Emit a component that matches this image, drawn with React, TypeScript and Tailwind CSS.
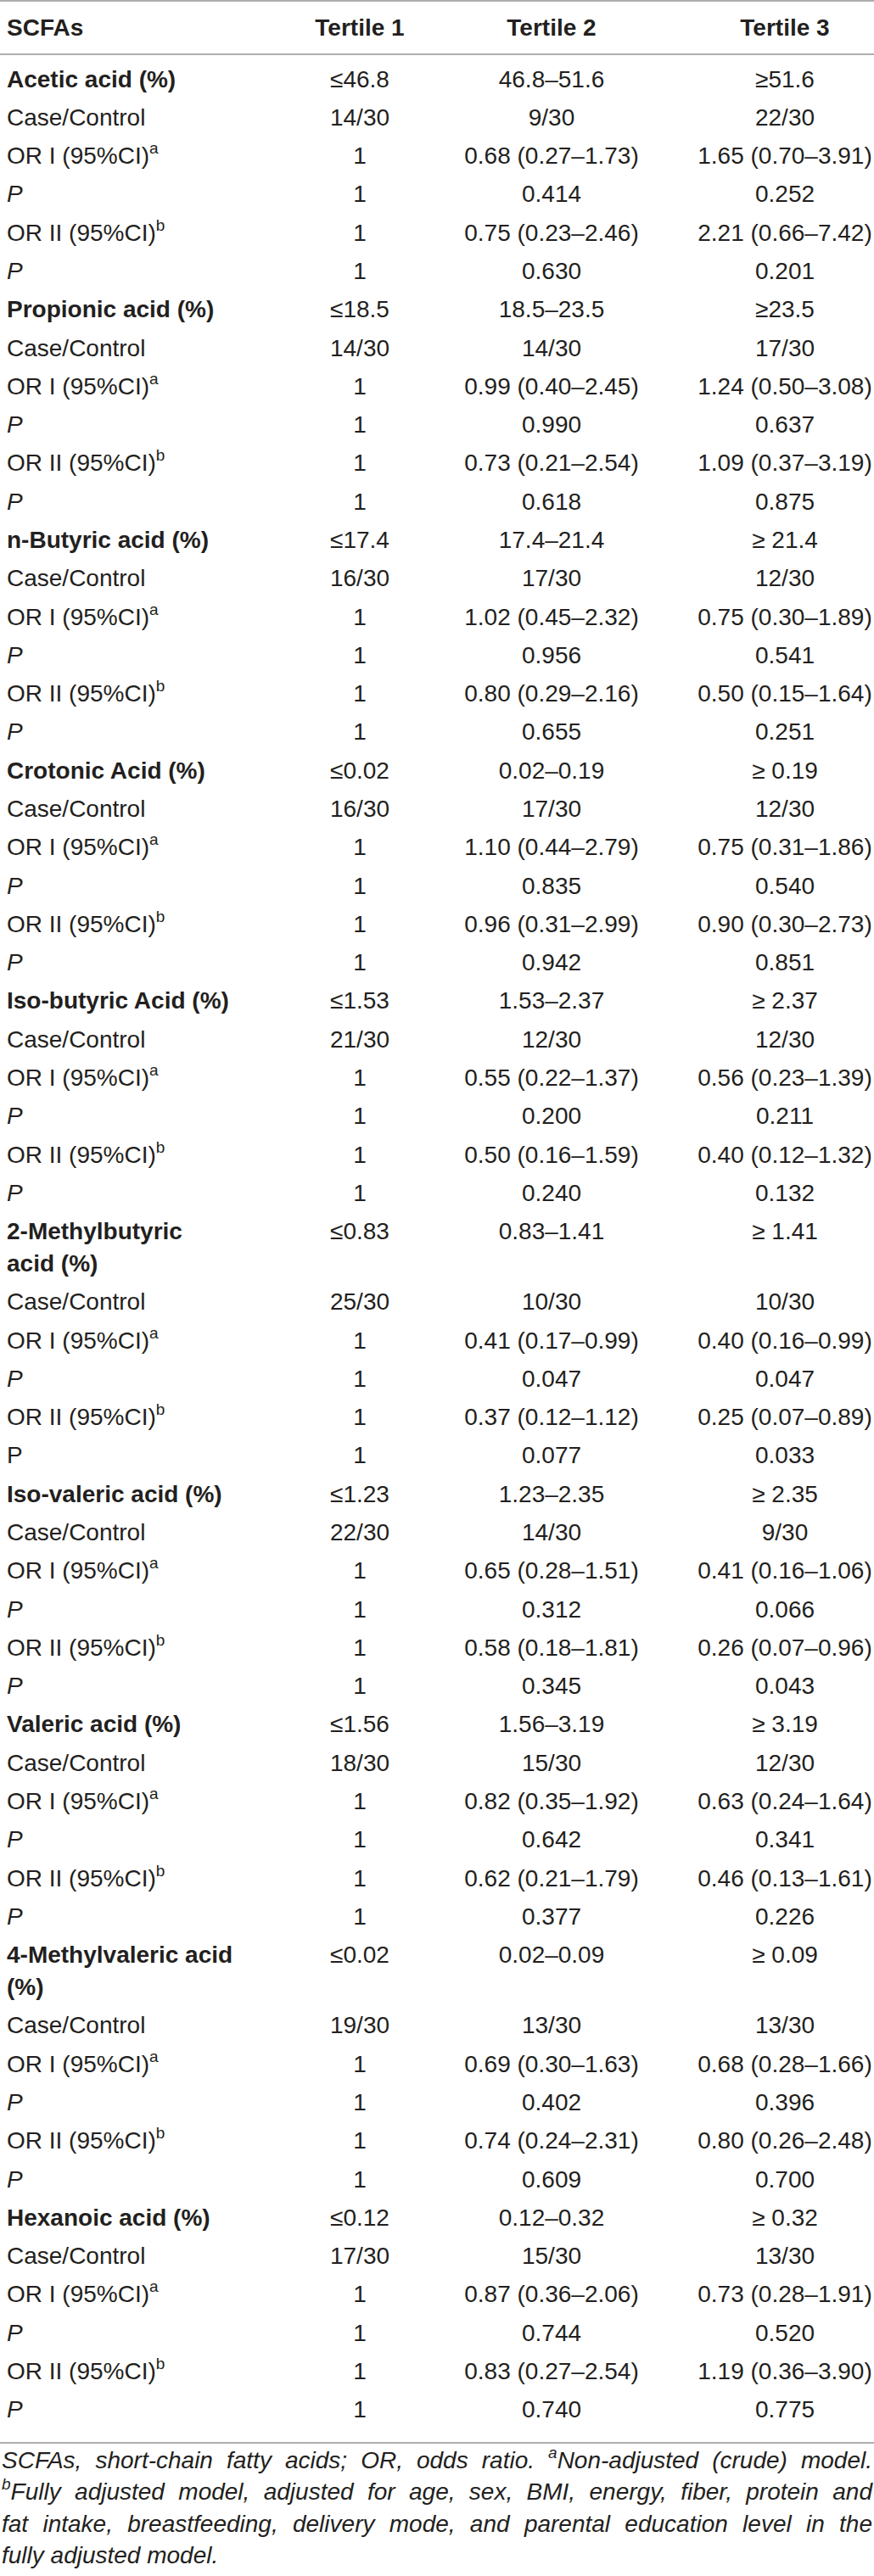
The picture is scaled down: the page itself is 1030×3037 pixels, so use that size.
import React from "react";

type Row = { label: React.ReactNode; c: [string, string, string] };
type Group = { name: React.ReactNode; range: [string, string, string]; rows: [string, string, string][]; lastPUpright?: boolean };

const Sup = ({ children }: { children: React.ReactNode }) => (
  <sup className="text-[19px] leading-none relative top-[-12px] align-baseline">{children}</sup>
);

const groups: Group[] = [
  {
    name: "Acetic acid (%)",
    range: ["≤46.8", "46.8–51.6", "≥51.6"],
    rows: [
      ["14/30", "9/30", "22/30"],
      ["1", "0.68 (0.27–1.73)", "1.65 (0.70–3.91)"],
      ["1", "0.414", "0.252"],
      ["1", "0.75 (0.23–2.46)", "2.21 (0.66–7.42)"],
      ["1", "0.630", "0.201"],
    ],
  },
  {
    name: "Propionic acid (%)",
    range: ["≤18.5", "18.5–23.5", "≥23.5"],
    rows: [
      ["14/30", "14/30", "17/30"],
      ["1", "0.99 (0.40–2.45)", "1.24 (0.50–3.08)"],
      ["1", "0.990", "0.637"],
      ["1", "0.73 (0.21–2.54)", "1.09 (0.37–3.19)"],
      ["1", "0.618", "0.875"],
    ],
  },
  {
    name: "n-Butyric acid (%)",
    range: ["≤17.4", "17.4–21.4", "≥ 21.4"],
    rows: [
      ["16/30", "17/30", "12/30"],
      ["1", "1.02 (0.45–2.32)", "0.75 (0.30–1.89)"],
      ["1", "0.956", "0.541"],
      ["1", "0.80 (0.29–2.16)", "0.50 (0.15–1.64)"],
      ["1", "0.655", "0.251"],
    ],
  },
  {
    name: "Crotonic Acid (%)",
    range: ["≤0.02", "0.02–0.19", "≥ 0.19"],
    rows: [
      ["16/30", "17/30", "12/30"],
      ["1", "1.10 (0.44–2.79)", "0.75 (0.31–1.86)"],
      ["1", "0.835", "0.540"],
      ["1", "0.96 (0.31–2.99)", "0.90 (0.30–2.73)"],
      ["1", "0.942", "0.851"],
    ],
  },
  {
    name: "Iso-butyric Acid (%)",
    range: ["≤1.53", "1.53–2.37", "≥ 2.37"],
    rows: [
      ["21/30", "12/30", "12/30"],
      ["1", "0.55 (0.22–1.37)", "0.56 (0.23–1.39)"],
      ["1", "0.200", "0.211"],
      ["1", "0.50 (0.16–1.59)", "0.40 (0.12–1.32)"],
      ["1", "0.240", "0.132"],
    ],
  },
  {
    name: (
      <>
        2-Methylbutyric
        <br />
        acid (%)
      </>
    ),
    range: ["≤0.83", "0.83–1.41", "≥ 1.41"],
    rows: [
      ["25/30", "10/30", "10/30"],
      ["1", "0.41 (0.17–0.99)", "0.40 (0.16–0.99)"],
      ["1", "0.047", "0.047"],
      ["1", "0.37 (0.12–1.12)", "0.25 (0.07–0.89)"],
      ["1", "0.077", "0.033"],
    ],
    lastPUpright: true,
  },
  {
    name: "Iso-valeric acid (%)",
    range: ["≤1.23", "1.23–2.35", "≥ 2.35"],
    rows: [
      ["22/30", "14/30", "9/30"],
      ["1", "0.65 (0.28–1.51)", "0.41 (0.16–1.06)"],
      ["1", "0.312", "0.066"],
      ["1", "0.58 (0.18–1.81)", "0.26 (0.07–0.96)"],
      ["1", "0.345", "0.043"],
    ],
  },
  {
    name: "Valeric acid (%)",
    range: ["≤1.56", "1.56–3.19", "≥ 3.19"],
    rows: [
      ["18/30", "15/30", "12/30"],
      ["1", "0.82 (0.35–1.92)", "0.63 (0.24–1.64)"],
      ["1", "0.642", "0.341"],
      ["1", "0.62 (0.21–1.79)", "0.46 (0.13–1.61)"],
      ["1", "0.377", "0.226"],
    ],
  },
  {
    name: (
      <>
        4-Methylvaleric acid
        <br />
        (%)
      </>
    ),
    range: ["≤0.02", "0.02–0.09", "≥ 0.09"],
    rows: [
      ["19/30", "13/30", "13/30"],
      ["1", "0.69 (0.30–1.63)", "0.68 (0.28–1.66)"],
      ["1", "0.402", "0.396"],
      ["1", "0.74 (0.24–2.31)", "0.80 (0.26–2.48)"],
      ["1", "0.609", "0.700"],
    ],
  },
  {
    name: "Hexanoic acid (%)",
    range: ["≤0.12", "0.12–0.32", "≥ 0.32"],
    rows: [
      ["17/30", "15/30", "13/30"],
      ["1", "0.87 (0.36–2.06)", "0.73 (0.28–1.91)"],
      ["1", "0.744", "0.520"],
      ["1", "0.83 (0.27–2.54)", "1.19 (0.36–3.90)"],
      ["1", "0.740", "0.775"],
    ],
  },
];

const gridCls = "grid grid-cols-[368px_112px_340px_210px]";
const cell = "py-[3.65px] leading-[38px] whitespace-nowrap";

function Line({ label, c, bold }: { label: React.ReactNode; c: [string, string, string]; bold?: boolean }) {
  return (
    <div className={gridCls}>
      <div className={`${cell} pl-[8px] ${bold ? "font-bold" : ""}`}>{label}</div>
      <div className={`${cell} text-center`}>{c[0]}</div>
      <div className={`${cell} text-center`}>{c[1]}</div>
      <div className={`${cell} text-center`}>{c[2]}</div>
    </div>
  );
}

export default function App() {
  return (
    <div
      className="w-[1030px] h-[3037px] bg-white text-[#231f20] text-[28px] overflow-hidden"
      style={{ fontFamily: '"Liberation Sans", Arial, Helvetica, sans-serif' }}
    >
      <div className="border-t-2 border-[#aeaeae]" />
      <div className={`${gridCls} font-bold pt-[12px] pb-[11px]`}>
        <div className="pl-[8px] leading-[38px]">SCFAs</div>
        <div className="text-center leading-[38px]">Tertile 1</div>
        <div className="text-center leading-[38px]">Tertile 2</div>
        <div className="text-center leading-[38px]">Tertile 3</div>
      </div>
      <div className="border-t-2 border-[#aeaeae]" />
      <div className="pt-[6px] pb-[15px]">
        {groups.map((g, gi) => (
          <div key={gi} className="flex flex-col">
            <Line label={g.name} c={g.range} bold />
            <Line label="Case/Control" c={g.rows[0]} />
            <Line
              label={
                <>
                  OR I (95%CI)<Sup>a</Sup>
                </>
              }
              c={g.rows[1]}
            />
            <Line label={<span className="italic">P</span>} c={g.rows[2]} />
            <Line
              label={
                <>
                  OR II (95%CI)<Sup>b</Sup>
                </>
              }
              c={g.rows[3]}
            />
            <Line label={g.lastPUpright ? <span>P</span> : <span className="italic">P</span>} c={g.rows[4]} />
          </div>
        ))}
      </div>
      <div className="border-t-2 border-[#aeaeae]" />
      <div className="pt-[1px] pb-[4px] pl-[2px] pr-[2px] italic leading-[37.5px]">
        <div className="text-justify [text-align-last:justify]">
          SCFAs, short-chain fatty acids; OR, odds ratio. <Sup>a</Sup>Non-adjusted (crude) model.
        </div>
        <div className="text-justify [text-align-last:justify]">
          <Sup>b</Sup>Fully adjusted model, adjusted for age, sex, BMI, energy, fiber, protein and
        </div>
        <div className="text-justify [text-align-last:justify]">
          fat intake, breastfeeding, delivery mode, and parental education level in the
        </div>
        <div>fully adjusted model.</div>
      </div>
    </div>
  );
}
